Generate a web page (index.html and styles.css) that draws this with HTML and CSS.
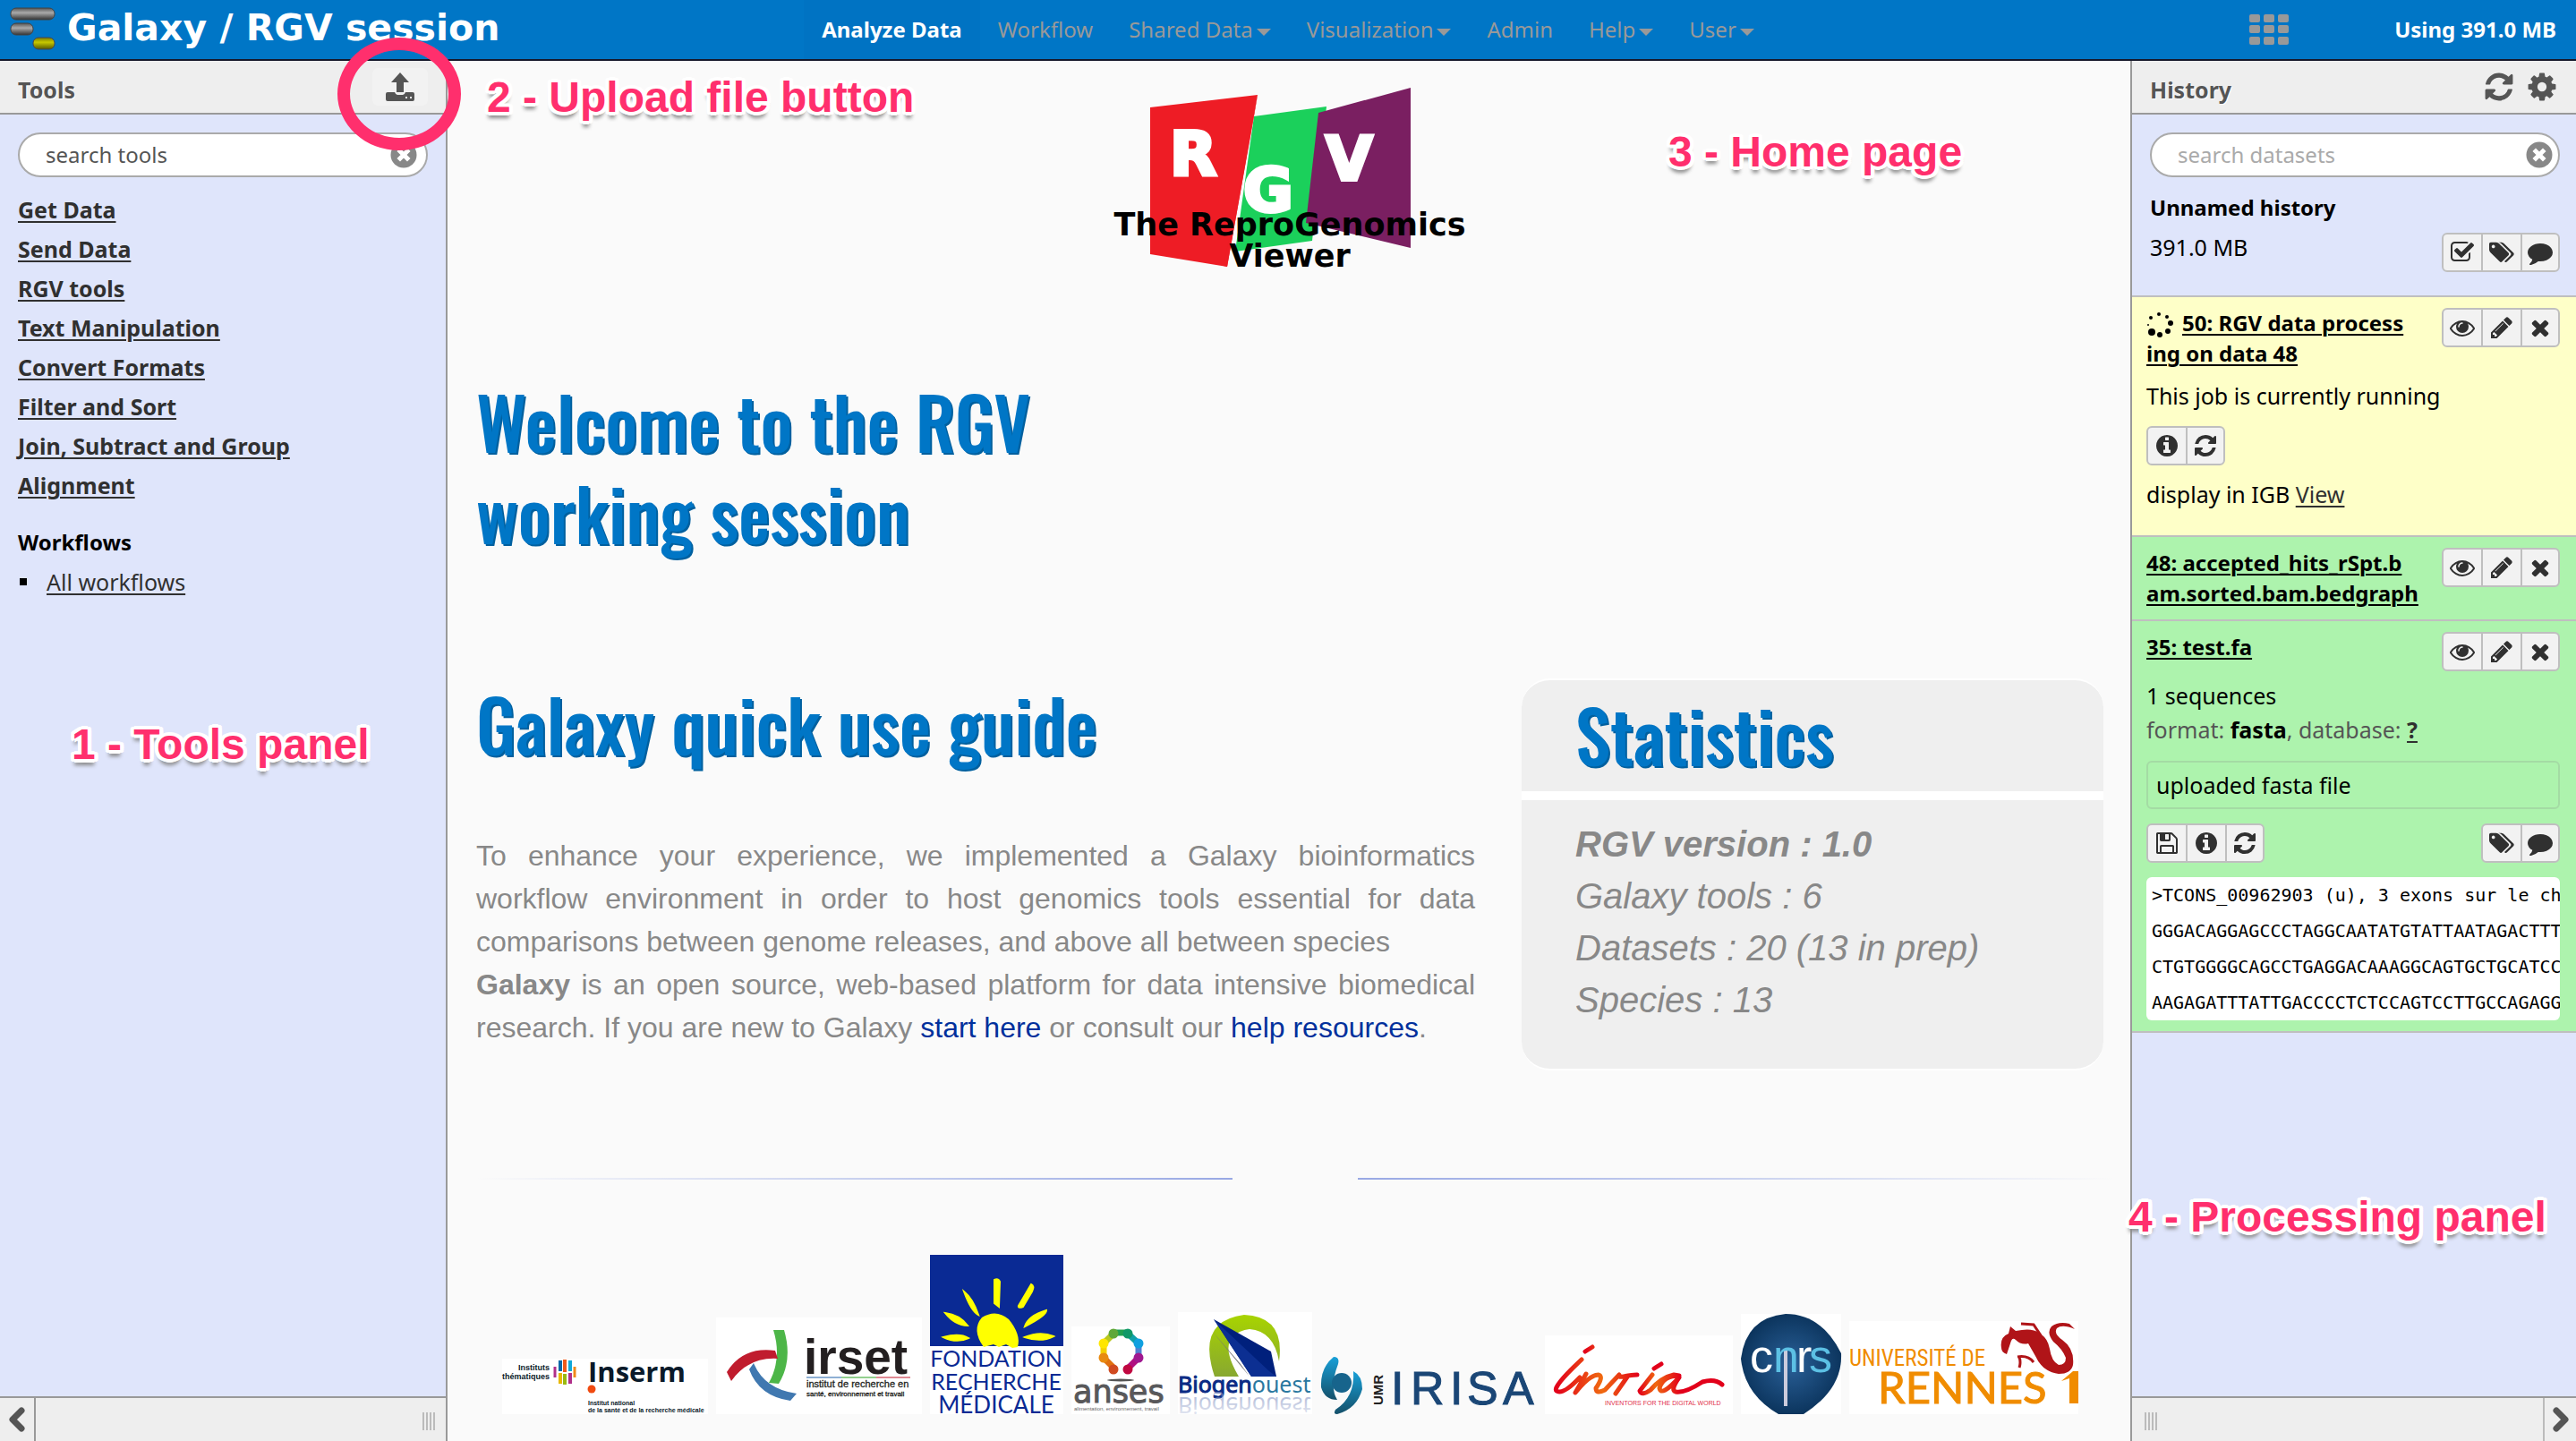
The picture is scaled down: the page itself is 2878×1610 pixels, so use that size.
FILE: index.html
```html
<!DOCTYPE html>
<html lang="en">
<head>
<meta charset="utf-8">
<title>Galaxy / RGV session</title>
<link rel="stylesheet" href="styles.css">
</head>
<body>
<svg class="sprite" aria-hidden="true">
  <symbol id="i-refresh" viewBox="0 0 1792 1792"><path d="M1639 1056q0 5-1 7-64 268-268 434.5t-478 166.5q-146 0-282.5-55t-243.5-157l-129 129q-19 19-45 19t-45-19-19-45v-448q0-26 19-45t45-19h448q26 0 45 19t19 45-19 45l-137 137q71 66 161 102t187 36q134 0 250-65t186-179q11-17 53-117 8-23 30-23h192q13 0 22.5 9.5t9.5 22.5zm25-800v448q0 26-19 45t-45 19h-448q-26 0-45-19t-19-45 19-45l138-138q-148-137-349-137-134 0-250 65t-186 179q-11 17-53 117-8 23-30 23h-199q-13 0-22.5-9.5t-9.5-22.5v-7q65-268 270-434.5t480-166.5q146 0 284 55.5t245 156.5l130-129q19-19 45-19t45 19 19 45z"/></symbol>
  <symbol id="i-cog" viewBox="0 0 1792 1792"><path d="M1152 896q0-106-75-181t-181-75-181 75-75 181 75 181 181 75 181-75 75-181zm512-109v222q0 12-8 23t-20 13l-185 28q-19 54-39 91 35 50 107 138 10 12 10 25t-9 23q-27 37-99 108t-94 71q-12 0-26-9l-138-108q-44 23-91 38-16 136-29 186-7 28-36 28h-222q-14 0-24.5-8.5t-11.5-21.5l-28-184q-49-16-90-37l-141 107q-10 9-25 9-14 0-25-11-126-114-165-168-7-10-7-23 0-12 8-23 15-21 51-66.5t54-70.5q-27-50-41-99l-183-27q-13-2-21-12.5t-8-23.5v-222q0-12 8-23t19-13l186-28q14-46 39-92-40-57-107-138-10-12-10-24 0-10 9-23 26-36 98.5-107.5t94.5-71.5q13 0 26 10l138 107q44-23 91-38 16-136 29-186 7-28 36-28h222q14 0 24.5 8.5t11.5 21.5l28 184q49 16 90 37l142-107q9-9 24-9 13 0 25 10 129 119 165 170 7 8 7 22 0 12-8 23-15 21-51 66.5t-54 70.5q26 50 41 98l183 28q13 2 21 12.5t8 23.5z"/></symbol>
  <symbol id="i-pencil" viewBox="0 0 1792 1792"><path d="M491 1536l91-91-235-235-91 91v107h128v128h107zm523-928q0-22-22-22-10 0-17 7l-542 542q-7 7-7 17 0 22 22 22 10 0 17-7l542-542q7-7 7-17zm-54-192l416 416-832 832h-416v-416zm683 96q0 53-37 90l-166 166-416-416 166-165q36-38 90-38 53 0 91 38l235 234q37 39 37 91z"/></symbol>
  <symbol id="i-times" viewBox="0 0 1792 1792"><path d="M1490 1322q0 40-28 68l-136 136q-28 28-68 28t-68-28l-294-294-294 294q-28 28-68 28t-68-28l-136-136q-28-28-28-68t28-68l294-294-294-294q-28-28-28-68t28-68l136-136q28-28 68-28t68 28l294 294 294-294q28-28 68-28t68 28l136 136q28 28 28 68t-28 68l-294 294 294 294q28 28 28 68z"/></symbol>
  <symbol id="i-eye" viewBox="0 0 1792 1792"><path d="M1664 960q-152-236-381-353 61 104 61 225 0 185-131.5 316.5t-316.5 131.5-316.5-131.5-131.5-316.5q0-121 61-225-229 117-381 353 133 205 333.5 326.5t434.5 121.5 434.5-121.5 333.5-326.5zm-720-384q0-20-14-34t-34-14q-125 0-214.5 89.5t-89.5 214.5q0 20 14 34t34 14 34-14 14-34q0-86 61-147t147-61q20 0 34-14t14-34zm848 384q0 34-20 69-140 230-376.5 368.5t-499.5 138.5-499.5-139-376.5-368q-20-35-20-69t20-69q140-229 376.5-368t499.5-139 499.5 139 376.5 368q20 35 20 69z"/></symbol>
  <symbol id="i-info" viewBox="0 0 1792 1792"><path d="M1152 1376v-160q0-14-9-23t-23-9h-96v-512q0-14-9-23t-23-9h-320q-14 0-23 9t-9 23v160q0 14 9 23t23 9h96v320h-96q-14 0-23 9t-9 23v160q0 14 9 23t23 9h448q14 0 23-9t9-23zm-128-896v-160q0-14-9-23t-23-9h-192q-14 0-23 9t-9 23v160q0 14 9 23t23 9h192q14 0 23-9t9-23zm640 416q0 209-103 385.5t-279.5 279.5-385.5 103-385.5-103-279.5-279.5-103-385.5 103-385.5 279.5-279.5 385.5-103 385.5 103 279.5 279.5 103 385.5z"/></symbol>
  <symbol id="i-comment" viewBox="0 0 1792 1792"><path d="M1792 896q0 174-120 321.5t-326 233-450 85.5q-70 0-145-8-198 175-460 242-49 14-114 22-17 2-30.5-9t-17.5-29v-1q-3-4-.5-12t2-10 4.5-9.5l6-9 7-8.5 8-9q7-8 31-34.5t34.5-38 31-39.5 32.5-51 27-59 26-76q-157-89-247.5-220t-90.5-281q0-130 71-248.5t191-204.5 286-136.5 348-50.5q244 0 450 85.5t326 233 120 321.5z"/></symbol>
  <symbol id="i-tags" viewBox="0 0 1920 1792"><path d="M448 448q0-53-37.5-90.5t-90.5-37.5-90.5 37.5-37.5 90.5 37.5 90.5 90.5 37.5 90.5-37.5 37.5-90.5zm1067 576q0 53-37 90l-491 492q-39 37-91 37-53 0-90-37l-715-716q-38-37-64.5-101t-26.5-117v-416q0-52 38-90t90-38h416q53 0 117 26.5t102 64.5l715 714q37 39 37 91zm384 0q0 53-37 90l-491 492q-39 37-91 37-36 0-59-14t-53-45l470-470q37-37 37-90 0-52-37-91l-715-714q-38-38-102-64.5t-117-26.5h224q53 0 117 26.5t102 64.5l715 714q37 39 37 91z"/></symbol>
  <symbol id="i-check" viewBox="0 0 1792 1792"><path d="M1472 930v318q0 119-84.5 203.5t-203.5 84.5h-832q-119 0-203.5-84.5t-84.5-203.5v-832q0-119 84.5-203.5t203.5-84.5h832q63 0 117 25 15 7 18 23 3 17-9 29l-49 49q-10 10-23 10-3 0-9-2-23-6-45-6h-832q-66 0-113 47t-47 113v832q0 66 47 113t113 47h832q66 0 113-47t47-113v-254q0-13 9-22l64-64q10-10 23-10 6 0 12 3 20 8 20 29zm231-489l-814 814q-24 24-57 24t-57-24l-430-430q-24-24-24-57t24-57l110-110q24-24 57-24t57 24l263 263 647-647q24-24 57-24t57 24l110 110q24 24 24 57t-24 57z"/></symbol>
  <symbol id="i-save" viewBox="0 0 1792 1792"><path d="M512 1536h768v-384h-768v384zm896 0h128v-896q0-14-10-38.5t-20-34.5l-281-281q-10-10-34-20t-39-10v416q0 40-28 68t-68 28h-576q-40 0-68-28t-28-68v-416h-128v1280h128v-416q0-40 28-68t68-28h832q40 0 68 28t28 68v416zm-384-928v-320q0-13-9.5-22.5t-22.5-9.5h-192q-13 0-22.5 9.5t-9.5 22.5v320q0 13 9.5 22.5t22.5 9.5h192q13 0 22.5-9.5t9.5-22.5zm640 32v928q0 40-28 68t-68 28h-1344q-40 0-68-28t-28-68v-1344q0-40 28-68t68-28h928q40 0 88 20t76 48l280 280q28 28 48 76t20 88z"/></symbol>
  <symbol id="i-clear" viewBox="0 0 30 30"><circle cx="15" cy="15" r="14.500" fill="#888"/><path d="M11 11l8 8M19 11l-8 8" stroke="#fff" stroke-width="5" stroke-linecap="square"/></symbol>
</svg>

<header class="masthead">
  <a class="brand" href="#">
    <svg class="brand-mark" viewBox="0 0 52 50" aria-hidden="true">
      <defs>
        <linearGradient id="gm" x1="0" y1="0" x2="0" y2="1"><stop offset="0" stop-color="#555"/><stop offset=".4" stop-color="#aaa"/><stop offset="1" stop-color="#333"/></linearGradient>
        <linearGradient id="gy" x1="0" y1="0" x2="0" y2="1"><stop offset="0" stop-color="#777a00"/><stop offset=".4" stop-color="#c8c800"/><stop offset="1" stop-color="#555800"/></linearGradient>
      </defs>
      <rect x="1" y="1" width="49" height="13" rx="6" fill="url(#gm)" stroke="#444"/>
      <rect x="1" y="18" width="25" height="13" rx="6" fill="url(#gm)" stroke="#444"/>
      <rect x="26" y="34" width="24" height="13" rx="6" fill="url(#gy)" stroke="#445"/>
    </svg>
    <span>Galaxy / RGV session</span>
  </a>
  <nav class="menu">
    <a class="active" href="#">Analyze Data</a>
    <a href="#">Workflow</a>
    <a class="drop" href="#">Shared Data</a>
    <a class="drop" href="#">Visualization</a>
    <a href="#">Admin</a>
    <a class="drop" href="#">Help</a>
    <a class="drop" href="#">User</a>
  </nav>
  <div class="usage">
    <a href="#" aria-label="Scratchbook"><svg class="grid-icon" viewBox="0 0 44 34"><g fill="#999"><rect width="12" height="9" rx="2"/><rect x="16" width="12" height="9" rx="2"/><rect x="32" width="12" height="9" rx="2"/><rect y="12" width="12" height="9" rx="2"/><rect x="16" y="12" width="12" height="9" rx="2"/><rect x="32" y="12" width="12" height="9" rx="2"/><rect y="25" width="12" height="9" rx="2"/><rect x="16" y="25" width="12" height="9" rx="2"/><rect x="32" y="25" width="12" height="9" rx="2"/></g></svg></a>
    <span>Using 391.0 MB</span>
  </div>
</header>

<div class="columns">
  <aside class="panel tools">
    <div class="panel-head">
      <h2>Tools</h2>
      <button class="upload" aria-label="Upload file"><svg viewBox="0 0 32 32"><path d="M16 0l10 11h-6v11h-8V11H6z"/><path d="M2 22h8q1 3 3 3h6q2 0 3-3h8q2 0 2 2v6q0 2-2 2H2q-2 0-2-2v-6q0-2 2-2z"/><path d="M22 27h2v2h-2zM27 27h2v2h-2z" fill="#eee"/></svg></button>
    </div>
    <div class="panel-body">
      <div class="search">
        <input type="text" value="search tools" aria-label="search tools">
        <button aria-label="clear search"><svg><use href="#i-clear"/></svg></button>
      </div>
      <ul class="tool-list">
        <li><a href="#">Get Data</a></li>
        <li><a href="#">Send Data</a></li>
        <li><a href="#">RGV tools</a></li>
        <li><a href="#">Text Manipulation</a></li>
        <li><a href="#">Convert Formats</a></li>
        <li><a href="#">Filter and Sort</a></li>
        <li><a href="#">Join, Subtract and Group</a></li>
        <li><a href="#">Alignment</a></li>
      </ul>
      <h3>Workflows</h3>
      <ul class="flow-list"><li><a href="#">All workflows</a></li></ul>
    </div>
    <div class="panel-foot">
      <button aria-label="Collapse tools"><svg viewBox="0 0 20 28"><path d="M15 4L5 14l10 10"/></svg></button>
      <span class="grip"></span>
    </div>
  </aside>

  <main class="home">
    <svg class="rgv-logo" viewBox="0 0 400 206" role="img" aria-label="The ReproGenomics Viewer">
      <path d="M44 22L164 8l-34 192-86-14z" fill="#ee1c25"/>
      <path d="M160 32l81-11-16 150-86 12z" fill="#1bd05b"/>
      <path d="M232 28L335 0v179l-117-28z" fill="#7a1f61"/>
      <path d="M164 8l-4 24-30 168-4-1z" fill="#ee1c25"/>
      <g class="logo-letter"><text x="66" y="98">R</text><text x="148" y="138">G</text><text x="240" y="103">V</text></g>
      <g class="logo-name"><text x="200" y="165">The ReproGenomics</text><text x="200" y="200">Viewer</text></g>
    </svg>

    <h1>Welcome to the RGV<br>working session</h1>

    <div class="intro">
      <section class="guide">
        <h2>Galaxy quick use guide</h2>
        <p>To enhance your experience, we implemented a Galaxy bioinformatics workflow environment in order to host genomics tools essential for data comparisons between genome releases, and above all between species</p>
        <p><b>Galaxy</b> is an open source, web-based platform for data intensive biomedical research. If you are new to Galaxy <a href="#">start here</a> or consult our <a href="#">help resources</a>.</p>
      </section>
      <section class="stats">
        <h2>Statistics</h2>
        <ul>
          <li><b>RGV version : 1.0</b></li>
          <li>Galaxy tools : 6</li>
          <li>Datasets : 20 (13 in prep)</li>
          <li>Species : 13</li>
        </ul>
      </section>
    </div>

    <div class="rules"><span></span><span></span></div>

    <div class="partners">
      <svg width="230" height="62" role="img" aria-label="Inserm">
        <rect width="230" height="62" fill="#fff"/>
        <g font-family="Liberation Sans" font-weight="bold" fill="#0a1a2a">
          <text x="53" y="13" font-size="9" text-anchor="end">Instituts</text><text x="53" y="23" font-size="9" text-anchor="end">thématiques</text>
          <text x="96" y="26" font-family="Open Sans" font-size="31">Inserm</text>
          <text x="96" y="52" font-size="7">Institut national</text><text x="96" y="60" font-size="7">de la santé et de la recherche médicale</text>
        </g>
        <path d="M59 9v12" stroke="#b0308a" stroke-width="3"/><path d="M65 2v12" stroke="#0a66a8" stroke-width="4"/><path d="M65 16v12" stroke="#e8b800" stroke-width="4"/><path d="M70 1v14" stroke="#f05a1a" stroke-width="4"/><path d="M70 17v12" stroke="#9aba10" stroke-width="4"/><path d="M76 2v12" stroke="#10a8d8" stroke-width="4"/><path d="M76 16v12" stroke="#b0308a" stroke-width="4"/><path d="M81 9v12" stroke="#f08a1a" stroke-width="3"/>
        <circle cx="100" cy="34" r="4.500" fill="#f04a10"/>
      </svg>
      <svg width="230" height="108" role="img" aria-label="irset">
        <rect width="230" height="108" fill="#fff"/>
        <path d="M64 14h12Q86 48 70 74l-11-1Q74 46 64 14z" fill="#4db648"/>
        <path d="M12 61Q30 32 66 37l3 9Q36 44 17 71z" fill="#c01c2e"/>
        <path d="M42 51Q54 80 90 85l-7 8Q48 88 37 58z" fill="#4078b0"/>
        <text x="98" y="63" font-family="Liberation Sans" font-weight="bold" font-size="55" fill="#231f20">irset</text>
        <path d="M101 67h39" stroke="#8fb0d4" stroke-width="2"/><path d="M140 67h39" stroke="#93d08f" stroke-width="2"/><path d="M179 67h38" stroke="#e08a94" stroke-width="2"/>
        <g font-family="Liberation Sans" fill="#231f20" stroke="#231f20" stroke-width=".3"><text x="101" y="78" font-size="11">institut de recherche en</text><text x="101" y="88" font-size="8">santé, environnement et travail</text></g>
      </svg>
      <svg width="149" height="178" role="img" aria-label="Fondation Recherche Médicale">
        <rect width="149" height="178" fill="#fff"/><rect width="149" height="102" fill="#0a2a94"/>
        <path d="M60 103Q46 84 58 70q16-10 30 2 14 17 10 31l-6 1-7-4-8 3-6-3z" fill="#ff0"/>
        <path d="M72 28q4-2 6 2l-1 28-5-4zM38 41q10 8 16 26-8-4-16-26zM113 33q4 2 1 8l-10 17q-6 2-5-1zM17 65q16 2 25 14-14 0-25-14zM130 62q0 6-24 18 4-12 24-18zM15 92q18-5 28 1-13 6-28-1zM106 92q17-7 32-1-14 7-32 1z" fill="#ff0" stroke="#ff0" stroke-width="2"/>
        <g font-family="Lato" font-size="25" fill="#0a2a94"><text x="74" y="125" text-anchor="middle">FONDATION</text><text x="74" y="151" text-anchor="middle">RECHERCHE</text><text x="74" y="177" text-anchor="middle" font-size="26">MÉDICALE</text></g>
      </svg>
      <svg width="110" height="98" role="img" aria-label="anses">
        <rect width="110" height="98" fill="#fff"/>
        <g stroke-width="7" fill="none"><path d="M48 47L36 35" stroke="#e07010"/><path d="M36 35V19" stroke="#f5d000"/><path d="M36 19l12-12" stroke="#b8c820"/><path d="M48 7h14" stroke="#20a050"/><path d="M62 7l13 12" stroke="#10a0a8"/><path d="M75 19v16" stroke="#5080d0"/><path d="M75 35L63 47" stroke="#b01080"/></g>
        <circle cx="47" cy="48" r="5.500" fill="#d04a20"/><circle cx="36" cy="35" r="5.500" fill="#e88a10"/><circle cx="36" cy="19" r="5.500" fill="#ffe600"/><circle cx="47" cy="8" r="5.500" fill="#60a838"/><circle cx="63" cy="8" r="5.500" fill="#109868"/><circle cx="75" cy="19" r="5.500" fill="#10a0e0"/><circle cx="75" cy="35" r="5.500" fill="#a01890"/><circle cx="63" cy="48" r="5.500" fill="#c00840"/>
        <ellipse cx="55" cy="60" rx="15" ry="1.500" fill="#555"/>
        <text x="2" y="85" font-family="DejaVu Sans" font-size="35" fill="#58585a" stroke="#58585a">anses</text>
        <text x="3" y="94" font-family="Liberation Sans" font-size="6" fill="#666">alimentation, environnement, travail</text>
      </svg>
      <svg width="150" height="114" role="img" aria-label="Biogenouest">
        <defs>
          <linearGradient id="fade" x1="0" y1="1" x2="0" y2="0"><stop offset="0" stop-color="#8090c0" stop-opacity=".7"/><stop offset="1" stop-color="#8090c0" stop-opacity=".1"/></linearGradient>
          <linearGradient id="lime" x1="0" y1="0" x2="0" y2="1"><stop offset="0" stop-color="#a8d400"/><stop offset="1" stop-color="#88a830"/></linearGradient>
        </defs>
        <rect width="150" height="114" fill="#fff"/>
        <path d="M41 72Q20 10 74 3q46 2 39 52-6-34-33-36-40 6-12 53z" fill="url(#lime)"/>
        <path d="M38 21L70 58l10 14z" fill="#777"/>
        <path d="M40 8l64 36 6 28H82z" fill="#00207c"/><path d="M40 8l62 58 8 6H82z" fill="#0c2f92"/>
        <text x="0" y="90" font-family="Noto Sans" font-size="25"><tspan fill="#0a2a84" stroke="#0a2a84">Biogen</tspan><tspan fill="#2a78a0">ouest</tspan></text>
        <g transform="scale(1 -1)" aria-hidden="true"><text x="0" y="-95" font-family="Noto Sans" font-size="25" fill="url(#fade)">Biogenouest</text></g>
      </svg>
      <svg width="242" height="66" role="img" aria-label="UMR IRISA">
        <defs><linearGradient id="teal" x1="0" y1="0" x2="0" y2="1"><stop offset="0" stop-color="#18a0d8"/><stop offset="1" stop-color="#15506a"/></linearGradient></defs>
        <path d="M15 2q7 0 5 8-10 26-1 40-14 0-18-14Q0 14 15 2z" fill="url(#teal)"/>
        <path d="M37 18q10 5 10 20-6 22-28 28-5 0-2-5 22-14 20-43z" fill="url(#teal)"/><circle cx="24" cy="31" r="11" fill="#17648c"/>
        <text transform="rotate(-90 70 56)" x="70" y="56" font-family="Liberation Sans" font-size="15" font-weight="bold" fill="#222">UMR</text>
        <g font-family="Liberation Sans" font-size="52" fill="#1a4676" stroke="#1a4676"><text x="79" y="55">I</text><text x="101" y="55">R</text><text x="145" y="55">I</text><text x="164" y="55">S</text><text x="204" y="55">A</text></g>
      </svg>
      <svg width="210" height="88" role="img" aria-label="Inria">
        <defs><linearGradient id="inr" x1="0" y1="0" x2="1" y2="0"><stop offset="0" stop-color="#e2001a"/><stop offset=".28" stop-color="#f06a10"/><stop offset=".5" stop-color="#e2001a"/><stop offset=".6" stop-color="#f06a10"/><stop offset=".75" stop-color="#e2001a"/></linearGradient></defs>
        <rect width="210" height="88" fill="#fff"/>
        <g fill="none" stroke="url(#inr)" stroke-width="5" stroke-linecap="round" stroke-linejoin="round"><path d="M53 13l-8 5M130 32l-8 5"/><path d="M41 27Q8 58 13 62q7 5 26-15M46 43L34 64Q50 44 60 44q6 2-3 15 0 7 10 2l16-17q-4 4 10 1l-14 20M93 45q8-1 10-1M120 44l-14 18q2 6 12-1 12-14 26-17l6 1q-18 0-22 14 2 10 22-12-10 14-4 16 10 2 30-11 14-4 22 3"/></g>
        <text x="67" y="78" font-family="Liberation Sans" font-size="7" fill="#e2304a">INVENTORS FOR THE DIGITAL WORLD</text>
      </svg>
      <svg width="112" height="112" role="img" aria-label="CNRS">
        <defs><radialGradient id="navy"><stop offset="0" stop-color="#2a6098"/><stop offset="1" stop-color="#0c355e"/></radialGradient></defs>
        <rect width="112" height="112" fill="#fff"/><path d="M50 0Q90 0 112 44q2 40-42 68H42Q4 90 0 50 6 4 50 0z" fill="url(#navy)"/>
        <path d="M50 40v63" stroke="#ccd" stroke-width="4"/>
        <g font-family="Liberation Sans" font-size="52"><text x="10" y="65" fill="#fff">c</text><text x="36" y="65" fill="#5cc0e4">n</text><text x="62" y="65" fill="#fff">r</text><text x="76" y="65" fill="#5cc0e4">s</text></g>
      </svg>
      <svg width="256" height="104" role="img" aria-label="Université de Rennes 1">
        <rect width="256" height="104" fill="#fff"/>
        <text x="0" y="50" font-family="Roboto Condensed" font-size="25" fill="#f08c00">UNIVERSITÉ DE</text>
        <text x="32" y="92" font-family="Lato" font-size="49" fill="#f08c00" stroke="#f08c00">RENNES</text>
        <path d="M246 92V64l-9 3 13-11h6v36z" fill="#f08c00"/>
        <path d="M170 30q-2-12 8-16l2-8 6 5q18-4 26 2 10 6 12 18 2 14 10 18 8 0 8-8-4-10-14-18-8-10-2-17 8-6 20-3l6 6q-14-6-20-1-4 6 6 13 14 10 12 28-2 10-16 10-18-2-26-20l-8-14q-8 2-14-4-4-4-6 4l-4 12q-6-2-6-7z" fill="#b01418"/>
        <path d="M188 40q12-2 18 6M190 40q2 6 0 12M192 3l14 1 8 12" fill="none" stroke="#b01418" stroke-width="3"/>
      </svg>
    </div>
  </main>

  <aside class="panel history">
    <div class="panel-head">
      <h2>History</h2>
      <div class="head-actions">
        <button aria-label="Refresh history"><svg><use href="#i-refresh"/></svg></button>
        <button aria-label="History options"><svg><use href="#i-cog"/></svg></button>
      </div>
    </div>
    <div class="panel-body">
      <div class="search">
        <input type="text" placeholder="search datasets" aria-label="search datasets">
        <button aria-label="clear search"><svg><use href="#i-clear"/></svg></button>
      </div>
      <h3>Unnamed history</h3>
      <div class="row size">
        <span>391.0 MB</span>
        <div class="btns"><button aria-label="Select"><svg><use href="#i-check"/></svg></button><button aria-label="Tags"><svg><use href="#i-tags"/></svg></button><button aria-label="Annotation"><svg><use href="#i-comment"/></svg></button></div>
      </div>
    </div>
    <article class="dataset running">
      <div class="row">
        <a class="title" href="#"><svg class="spinner" viewBox="0 0 30 30"><circle cx="5" cy="7" r="2"/><circle cx="14" cy="3" r="2"/><circle cx="23" cy="6" r="2"/><circle cx="27" cy="13" r="3"/><circle cx="2" cy="15" r="1"/><circle cx="24" cy="22" r="3"/><circle cx="15" cy="26" r="3"/><circle cx="6" cy="23" r="4"/></svg><span>50: RGV data process<br>ing on data 48</span></a>
        <div class="btns"><button aria-label="View"><svg><use href="#i-eye"/></svg></button><button aria-label="Edit"><svg><use href="#i-pencil"/></svg></button><button aria-label="Delete"><svg><use href="#i-times"/></svg></button></div>
      </div>
      <p class="state">This job is currently running</p>
      <div class="row"><div class="btns"><button aria-label="Details"><svg><use href="#i-info"/></svg></button><button aria-label="Run again"><svg><use href="#i-refresh"/></svg></button></div></div>
      <p class="display">display in IGB <a href="#">View</a></p>
    </article>
    <article class="dataset">
      <div class="row">
        <a class="title" href="#"><span>48: accepted_hits_rSpt.b<br>am.sorted.bam.bedgraph</span></a>
        <div class="btns"><button aria-label="View"><svg><use href="#i-eye"/></svg></button><button aria-label="Edit"><svg><use href="#i-pencil"/></svg></button><button aria-label="Delete"><svg><use href="#i-times"/></svg></button></div>
      </div>
    </article>
    <article class="dataset open">
      <div class="row">
        <a class="title" href="#"><span>35: test.fa</span></a>
        <div class="btns"><button aria-label="View"><svg><use href="#i-eye"/></svg></button><button aria-label="Edit"><svg><use href="#i-pencil"/></svg></button><button aria-label="Delete"><svg><use href="#i-times"/></svg></button></div>
      </div>
      <p class="summary">1 sequences<br><span>format: <b>fasta</b>, database: <a href="#">?</a></span></p>
      <p class="info">uploaded fasta file</p>
      <div class="row">
        <div class="btns"><button aria-label="Download"><svg><use href="#i-save"/></svg></button><button aria-label="Details"><svg><use href="#i-info"/></svg></button><button aria-label="Run again"><svg><use href="#i-refresh"/></svg></button></div>
        <div class="btns"><button aria-label="Tags"><svg><use href="#i-tags"/></svg></button><button aria-label="Annotation"><svg><use href="#i-comment"/></svg></button></div>
      </div>
      <pre class="peek">&gt;TCONS_00962903 (u), 3 exons sur le ch
GGGACAGGAGCCCTAGGCAATATGTATTAATAGACTTT
CTGTGGGGCAGCCTGAGGACAAAGGCAGTGCTGCATCC
AAGAGATTTATTGACCCCTCTCCAGTCCTTGCCAGAGG</pre>
    </article>
    <div class="panel-foot">
      <span class="grip"></span>
      <button aria-label="Collapse history"><svg viewBox="0 0 20 28"><path d="M5 4l10 10L5 24"/></svg></button>
    </div>
  </aside>
</div>

<span class="ring"></span>
<span class="note note-tools">1 - Tools panel</span>
<span class="note note-upload">2 - Upload file button</span>
<span class="note note-home">3 - Home page</span>
<span class="note note-history">4 - Processing panel</span>
</body>
</html>
```
FILE: styles.css
```css
* { box-sizing: border-box; }
body {
  margin: 0;
  min-height: 100vh;
  display: flex;
  flex-direction: column;
  position: relative;
  overflow-x: hidden;
  font: 25px/44px "Noto Sans", "Open Sans", sans-serif;
  color: #000;
  background: #fafafa;
}
h1, h2, h3, p, ul, pre { margin: 0; padding: 0; }
ul { list-style: none; }
button {
  padding: 0;
  border: 0;
  background: none;
  display: flex;
  align-items: center;
  justify-content: center;
  color: inherit;
}
svg { display: block; fill: currentColor; }
.sprite { position: absolute; width: 0; height: 0; }

/* masthead */
.masthead {
  display: grid;
  grid-template-columns: 1fr auto 1fr;
  align-items: center;
  height: 68px;
  background: #0076c6;
  border-bottom: 2px solid #16182a;
  font-size: 24px;
}
.masthead a { text-decoration: none; }
.brand {
  display: flex;
  align-items: center;
  gap: 12px;
  padding-left: 11px;
  color: #fff;
  font: bold 41px/60px "DejaVu Sans", sans-serif;
  white-space: nowrap;
}
.brand span { padding-bottom: 4px; }
.brand-mark { width: 52px; height: 50px; }
.menu { display: flex; line-height: 66px; }
.menu a { padding: 0 20px; color: #999; white-space: nowrap; }
.menu .active { background: #0073c3; color: #fff; font-weight: bold; }
.drop::after {
  content: "";
  display: inline-block;
  margin-left: 4px;
  vertical-align: 2px;
  border: 8px solid transparent;
  border-top-color: #999;
  border-bottom: 0;
}
.usage {
  display: flex;
  align-items: center;
  justify-content: flex-end;
  gap: 118px;
  padding-right: 22px;
  color: #fff;
  font-weight: bold;
}
.grid-icon { width: 44px; height: 34px; }

/* page columns */
.columns {
  flex: 1;
  display: grid;
  grid-template-columns: 500px 1fr 498px;
}
.panel {
  display: flex;
  flex-direction: column;
  background: #dfe5fb;
}
.tools { border-right: 2px solid #999; }
.history { border-left: 2px solid #999; }
.panel-head {
  display: flex;
  align-items: center;
  justify-content: space-between;
  height: 60px;
  padding: 0 20px;
  background: #eee;
  border-bottom: 2px solid #999;
  color: #555;
}
.panel-head h2 { padding-top: 6px; font-size: 25px; text-shadow: 1px 1px 0 #fff; }
.upload {
  width: 62px;
  height: 42px;
  border-radius: 6px;
  background: #f2f2f2;
}
.upload svg { width: 32px; height: 32px; }
.head-actions { display: flex; gap: 12px; }
.head-actions svg { width: 36px; height: 36px; }
.panel-body { padding: 20px; }
.tools .panel-body { flex: 1; }

.search {
  display: flex;
  align-items: center;
  height: 50px;
  margin-bottom: 14px;
  padding: 0 6px 0 29px;
  border: 2px solid #aaa;
  border-radius: 25px;
  background: #fff;
}
.tools .search { padding-right: 10px; }
.search input {
  flex: 1;
  min-width: 0;
  padding: 0;
  border: 0;
  outline: 0;
  background: none;
  font: inherit;
  font-size: 24px;
  color: #555;
}
.search input::placeholder { color: #aaa; opacity: 1; }
.search svg { width: 30px; height: 30px; }

.tool-list { font-weight: bold; }
.panel-body a { color: #303030; }
.panel-body a, .dataset a { text-decoration-thickness: 2px; text-underline-offset: 3px; }
h3 { font-size: 24px; }
.tools h3 { margin-top: 20px; }
.flow-list li { display: flex; align-items: center; gap: 22px; padding-left: 2px; }
.flow-list li::before { content: ""; width: 8px; height: 8px; background: #000; }

.panel-foot {
  display: flex;
  align-items: center;
  justify-content: space-between;
  height: 50px;
  margin-top: auto;
  border-top: 2px solid #999;
  background: #eee;
}
.panel-foot button { width: 40px; height: 48px; border-right: 2px solid #999; }
.history .panel-foot button { width: 37px; border-right: 0; border-left: 2px solid #bbb; }
.panel-foot svg { width: 20px; height: 28px; fill: none; stroke: #555; stroke-width: 7px; stroke-linecap: round; stroke-linejoin: round; }
.grip {
  width: 14px;
  height: 20px;
  margin: 4px 12px 0 14px;
  background: repeating-linear-gradient(90deg, #bbb 0 2px, #eee 2px 4px);
}

/* home page */
.home { padding: 30px 30px 30px 32px; }
.rgv-logo { width: 400px; height: 206px; margin: 0 auto; overflow: visible; }
.logo-letter { font: bold 68px "DejaVu Sans", sans-serif; fill: #fff; stroke: #fff; stroke-width: 4px; }
.logo-name { font: bold 35px "DejaVu Sans", sans-serif; fill: #000; text-anchor: middle; }
.home h1, .home h2 {
  font: 500 79px/102px Oswald, "Roboto Condensed", sans-serif;
  color: #0076c6;
  text-shadow: 2px 2px 0 #00609f;
}
.home h1 { margin-top: 116px; }
.intro { display: flex; gap: 52px; margin-top: 134px; }
.guide { flex: 1; }
.guide h2 { margin: 0 0 72px; }
.guide p {
  font: 32px/48px "Liberation Sans", Arial, sans-serif;
  color: #888;
  text-align: justify;
}
.guide a { color: #00309c; text-decoration: none; }
.stats {
  flex: 0 0 650px;
  height: 438px;
  border: solid #fff;
  border-width: 2px 0;
  border-radius: 32px;
  background: #efefef;
  overflow: hidden;
}
.stats h2 { padding: 10px 60px 12px; border-bottom: 10px solid #fff; }
.stats ul {
  padding: 20px 60px;
  font: italic 40px/58px "Liberation Sans", Arial, sans-serif;
  color: #888;
}
.rules { display: flex; gap: 140px; margin: 120px -12px 84px 0; }
.rules span { flex: 1; height: 2px; background: linear-gradient(90deg, transparent, #98a8e4); }
.rules span + span { background: linear-gradient(270deg, transparent, #98a8e4); }
.partners { display: flex; align-items: flex-end; justify-content: center; gap: 9px; }
.partners svg { flex: none; overflow: visible; }

/* history */
.history .panel-body { height: 204px; padding-right: 18px; border-bottom: 2px solid #bfbfbf; }
.history .search { margin-bottom: 12px; }
.row { display: flex; justify-content: space-between; align-items: flex-start; }
.size { line-height: 44px; }
.size .btns { margin-top: 6px; }
.btns { display: flex; border: 2px solid #bfbfbf; border-radius: 6px; background: #f2f2f2; color: #303030; }
.btns button { width: 44px; height: 40px; }
.btns button:first-child, .btns button:last-child { width: 42px; }
.btns button + button { border-left: 2px solid #bfbfbf; }
.btns svg { width: 28px; height: 28px; }
.dataset {
  padding: 12px 18px 12px 16px;
  background: #adf3ad;
  border-bottom: 2px solid #bfbfbf;
  line-height: 36px;
}
.running { background: #feffc8; padding-bottom: 28px; }
.dataset a { color: #303030; }
.dataset .title { color: #000; font-size: 24px; font-weight: bold; line-height: 34px; }
.spinner { display: inline-block; width: 30px; height: 30px; margin-right: 10px; vertical-align: -8px; }
.state { margin: 12px 0 16px; }
.display { margin-top: 14px; }
.summary { margin: 8px 0 16px; line-height: 38px; }
.summary span { color: #555; }
.summary b { color: #000; }
.summary a { font-weight: bold; }
.info {
  height: 54px;
  margin-bottom: 16px;
  padding: 0 9px;
  border: 2px solid #a4dba4;
  border-radius: 6px;
  line-height: 50px;
}
.peek {
  margin-top: 16px;
  padding: 0 6px;
  border-radius: 6px;
  background: #fff;
  font: 20px/40px "DejaVu Sans Mono", monospace;
  overflow: hidden;
}

/* callouts laid over the page */
.ring {
  position: absolute;
  left: 377px;
  top: 42px;
  width: 138px;
  height: 126px;
  border: 14px solid #ff2f6d;
  border-radius: 50%;
  pointer-events: none;
}
.note {
  position: absolute;
  font: bold 48px/56px "Liberation Sans", Arial, sans-serif;
  color: #ff2f6d;
  white-space: nowrap;
  text-shadow: 4px 0 0 #fff, -4px 0 0 #fff, 0 4px 0 #fff, 0 -4px 0 #fff, 3px 3px 0 #fff, -3px 3px 0 #fff, 3px -3px 0 #fff, -3px -3px 0 #fff, 4px 2px 0 #fff, -4px 2px 0 #fff, 4px -2px 0 #fff, -4px -2px 0 #fff, 0 7px 4px #888;
}
.note-tools { left: 80px; top: 804px; }
.note-upload { left: 544px; top: 81px; }
.note-home { left: 1864px; top: 142px; }
.note-history { left: 2378px; top: 1332px; }
```
